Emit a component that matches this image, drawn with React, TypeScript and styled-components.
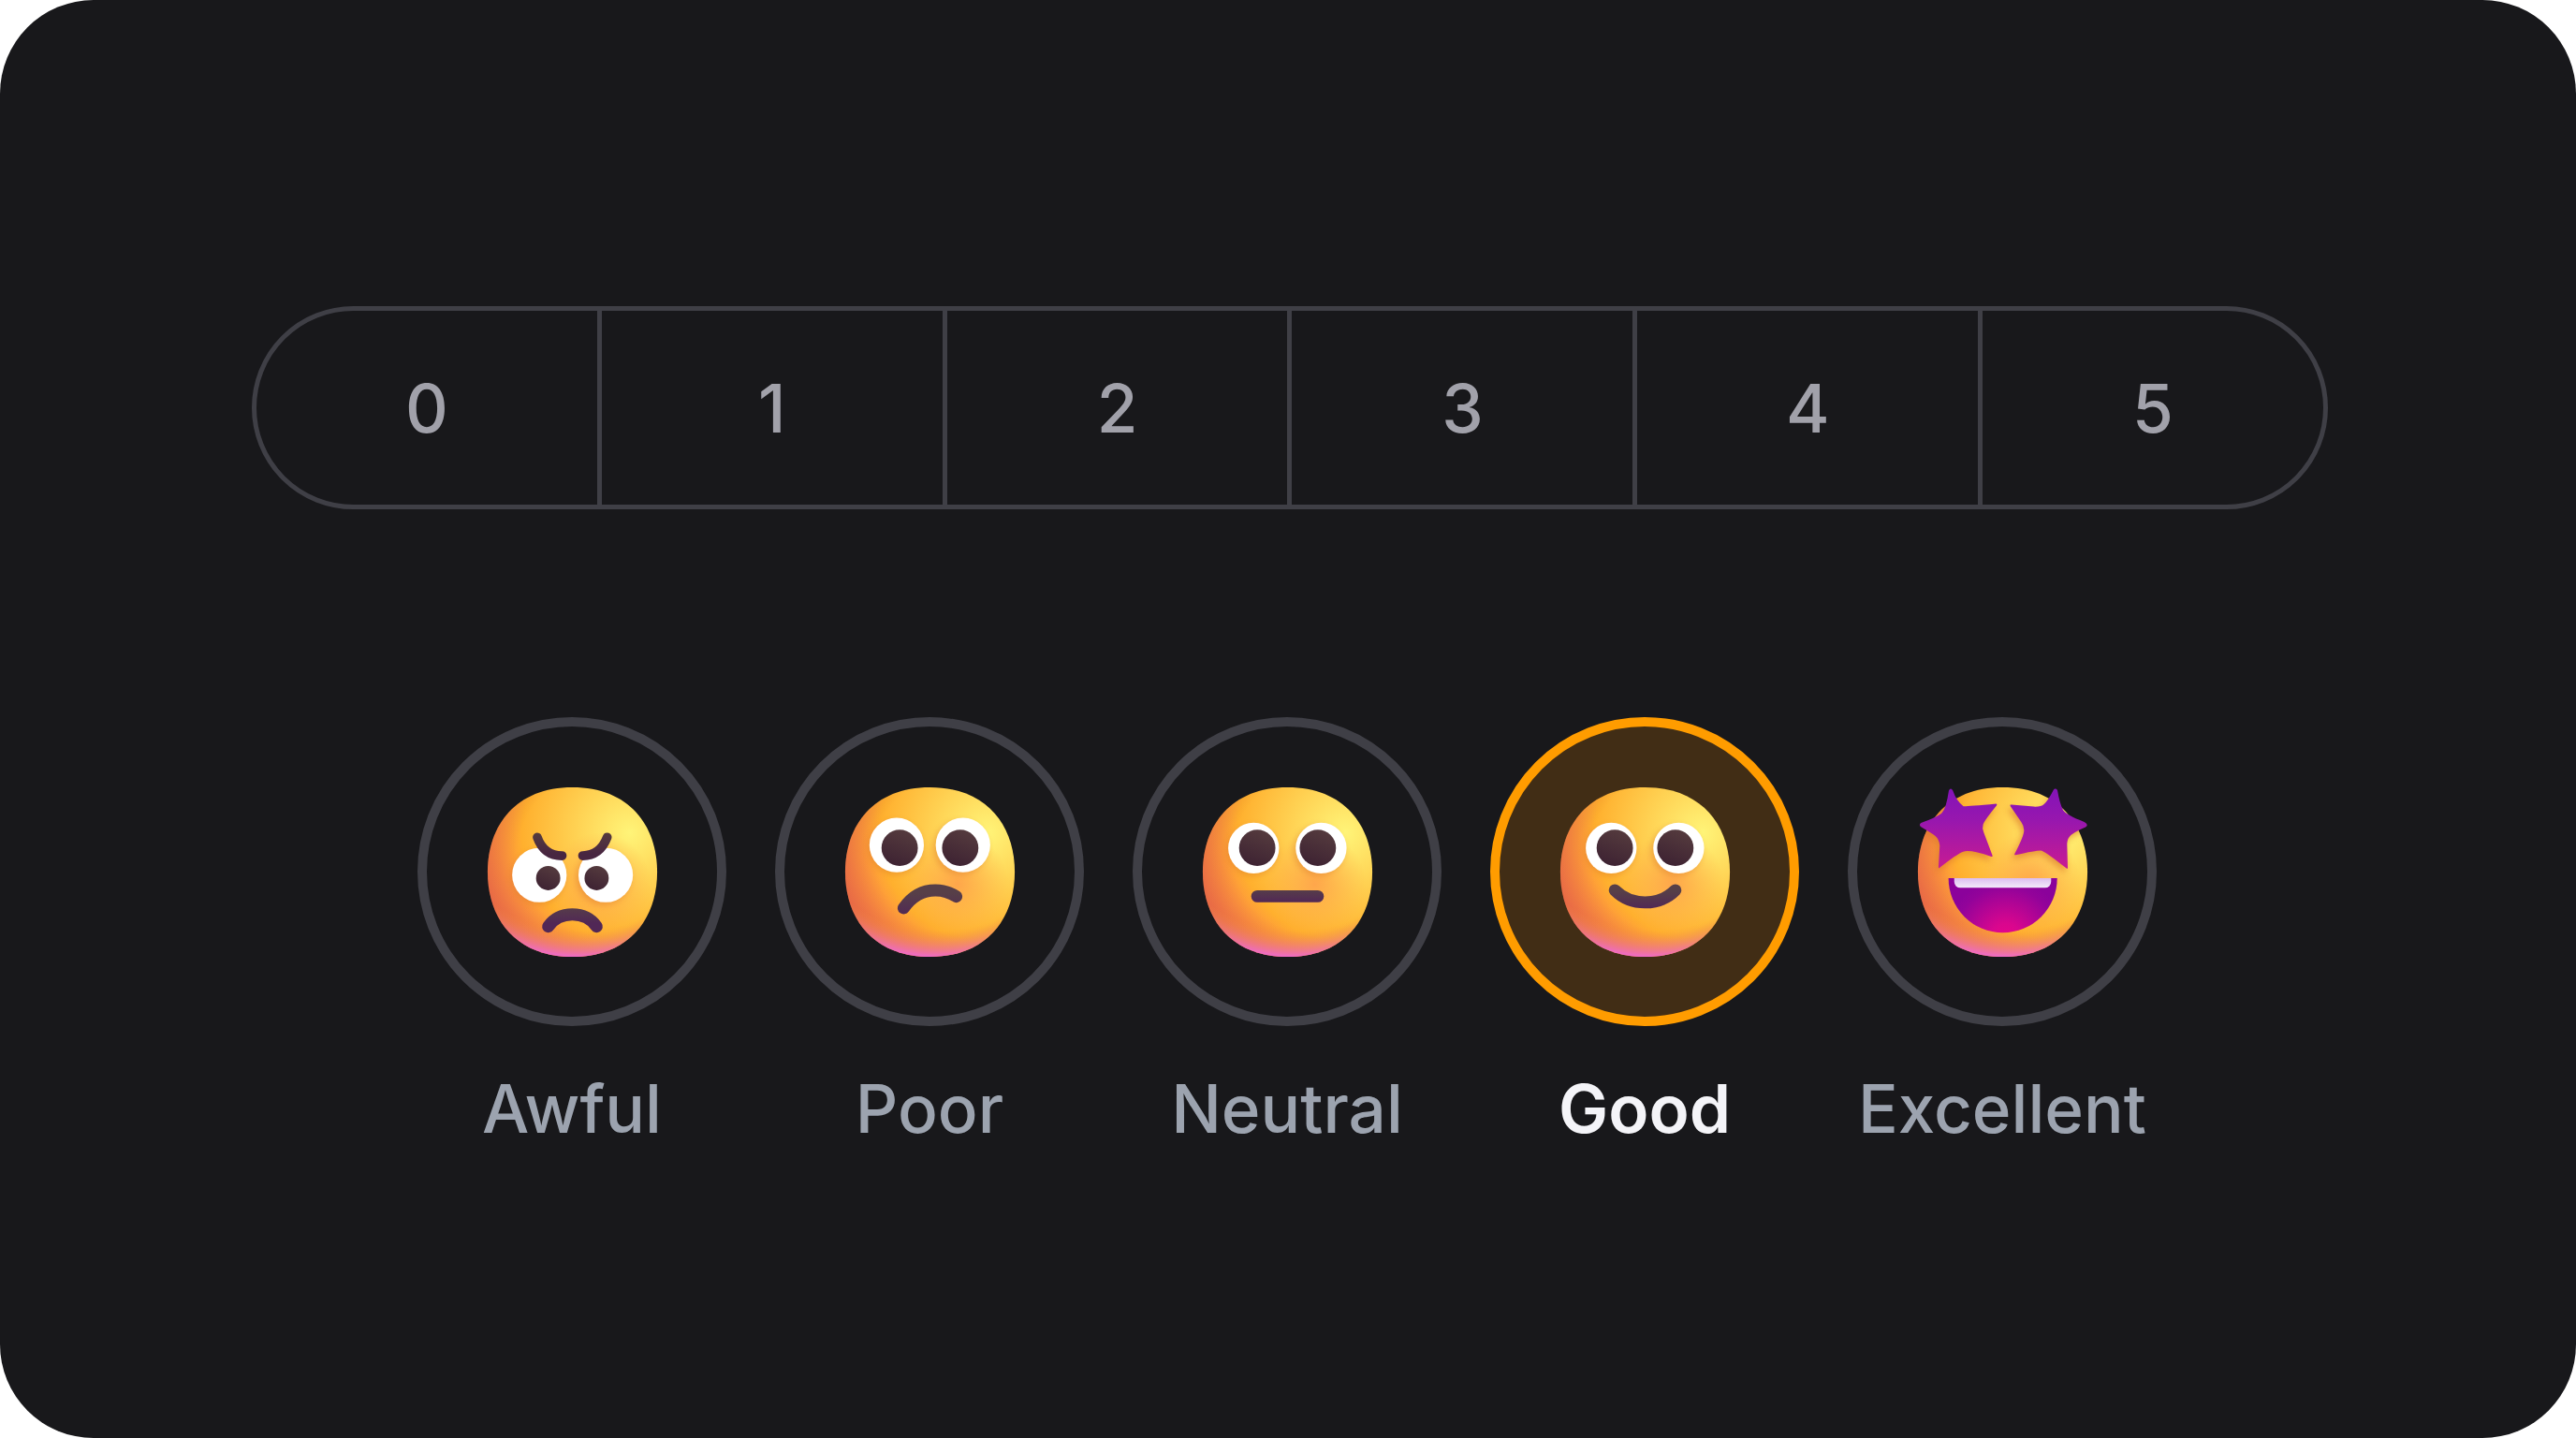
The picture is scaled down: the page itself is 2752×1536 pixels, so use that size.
import React, { useId, useState } from "react";
import styled, { createGlobalStyle } from "styled-components";

const GlobalStyle = createGlobalStyle`
  *, *::before, *::after { box-sizing: border-box; }
  body { margin: 0; background: #ffffff; }
`;

const Card = styled.main`
  display: flex;
  flex-direction: column;
  gap: 222px;
  min-height: 100vh;
  padding: 327px 265px 96px 269px;
  border-radius: 100px;
  background: #18181b;
  font-family: Inter, "Liberation Sans", sans-serif;
  font-size: 71px;
  line-height: 96px;
  font-weight: 500;
`;

const Scale = styled.div`
  display: flex;
`;

const ScaleButton = styled.button`
  flex: 1 1 0;
  height: 217px;
  padding: 0;
  border: 5px solid #3f3f46;
  background: transparent;
  color: #a1a1aa;
  font: inherit;
  cursor: pointer;

  & + & {
    margin-left: -5px;
  }
  &:first-child {
    border-radius: 109px 0 0 109px;
  }
  &:last-child {
    border-radius: 0 109px 109px 0;
  }
  &[aria-pressed="true"] {
    color: #f4f4f8;
  }
`;

const Moods = styled.div`
  display: flex;
  justify-content: center;
  gap: 52px;
  padding-right: 6px;
`;

const Mood = styled.label`
  display: flex;
  flex-direction: column;
  align-items: center;
  gap: 40px;
  width: 330px;
  cursor: pointer;
`;

const Dial = styled.span`
  display: grid;
  place-items: center;
  width: 330px;
  height: 330px;

  & > * {
    grid-area: 1 / 1;
  }
`;

const MoodInput = styled.input`
  appearance: none;
  width: 100%;
  height: 100%;
  margin: 0;
  border: 10px solid #3f3f46;
  border-radius: 50%;
  cursor: pointer;

  &:checked {
    border-color: #ff9c00;
    background: #412d15;
  }
`;

const MoodText = styled.span<{ $active: boolean }>`
  color: ${(p) => (p.$active ? "#f4f4f8" : "#9ca3af")};
  font-weight: ${(p) => (p.$active ? 600 : 500)};
`;

const FaceSvg = styled.svg`
  width: 207px;
  height: 207px;
  pointer-events: none;
`;

type Kind = "awful" | "poor" | "neutral" | "good" | "excellent";

const HEAD =
  "M16 30C25.33 30 30 23.73 30 16C30 8.27 25.33 2 16 2C6.67 2 2 8.27 2 16C2 23.73 6.67 30 16 30Z";

interface EyesProps {
  id: string;
  left: [number, number];
  right: [number, number];
  r: number;
  pupilLeft: [number, number];
  pupilRight: [number, number];
  pupilR: number;
}

function Eyes({ id, left, right, r, pupilLeft, pupilRight, pupilR }: EyesProps) {
  return (
    <>
      <g fill="#d9762b" opacity="0.4" filter={`url(#${id}-soft)`}>
        <circle cx={left[0] - 0.2} cy={left[1] + 0.4} r={r} />
        <circle cx={right[0] - 0.4} cy={right[1] + 0.4} r={r} />
      </g>
      <circle cx={left[0]} cy={left[1]} r={r} fill="#fff" />
      <circle cx={right[0]} cy={right[1]} r={r} fill="#fff" />
      <circle cx={pupilLeft[0]} cy={pupilLeft[1]} r={pupilR} fill={`url(#${id}-pupil)`} />
      <circle cx={pupilRight[0]} cy={pupilRight[1]} r={pupilR} fill={`url(#${id}-pupil)`} />
    </>
  );
}

const STARS =
  "M160 72Q166 60 173 72Q184 105 207 122Q215 123 312 114Q316 116 313 120Q275 166 270 180Q266 192 272 206L300 280Q301 284 296 283Q230 260 206 267Q185 275 131 318Q127 322 127 316L131 248Q130 228 116 216Q106 209 71 188Q63 181 71 175Q128 154 138 143Q152 128 160 72Z" +
  "M495 70Q501 62 508 70Q515 112 526 134Q536 150 594 172Q610 181 598 189Q556 207 546 220Q538 230 539 248L541 318Q541 324 536 320Q478 273 458 264Q445 262 374 278Q369 279 371 274Q402 214 401 198Q401 185 392 172L357 121Q355 116 361 117L432 123Q456 124 465 115Q478 104 495 70Z";

function Features({ id, kind }: { id: string; kind: Kind }) {
  const line = {
    fill: "none",
    stroke: `url(#${id}-mouth)`,
    strokeWidth: 2,
    strokeLinecap: "round" as const,
  };
  switch (kind) {
    case "awful":
      return (
        <>
          <Eyes id={id} left={[10.55, 16.5]} right={[21.5, 16.5]} r={4.5} pupilLeft={[12, 17]} pupilRight={[20, 17]} pupilR={2} />
          <g fill="none" stroke={`url(#${id}-brow)`} strokeWidth="1.5" strokeLinecap="round">
            <path d="M10.2 10.25C10.9 12.2 12.3 13.3 14.3 13.3" />
            <path d="M21.75 10.25C21 12.2 19.7 13.3 17.7 13.3" />
          </g>
          <path {...line} d="M12 25C12.9 23.7 14.3 23 16 23C17.7 23 19.1 23.7 20 25" />
        </>
      );
    case "poor":
      return (
        <>
          <Eyes id={id} left={[10.5, 11.55]} right={[21.45, 11.55]} r={4.5} pupilLeft={[11, 12]} pupilRight={[21, 12]} pupilR={3} />
          <path {...line} d="M11.65 21.95C13 20 14.8 19 16.9 19C18.3 19 19.4 19.4 20.35 20.05" />
        </>
      );
    case "neutral":
      return (
        <>
          <Eyes id={id} left={[10.4, 12.05]} right={[21.55, 12.05]} r={4.2} pupilLeft={[11, 12]} pupilRight={[21, 12]} pupilR={3} />
          <rect x="10" y="19" width="12" height="2" rx="1" fill={`url(#${id}-mouth)`} />
        </>
      );
    case "good":
      return (
        <>
          <Eyes id={id} left={[10.4, 12.05]} right={[21.55, 12.05]} r={4.2} pupilLeft={[11, 12]} pupilRight={[21, 12]} pupilR={3} />
          <path {...line} d="M11 19C12.3 20.3 14 21 16 21C18 21 19.7 20.3 21 19" />
        </>
      );
    default:
      return (
        <>
          <g clipPath={`url(#${id}-head)`}>
            <path d={STARS} transform="translate(-1.5 -.5) scale(.05155)" fill="#d9762b" opacity="0.6" filter={`url(#${id}-soft-star)`} />
          </g>
          <path d={STARS} transform="translate(-1.144 -1.144) scale(.05155)" fill={`url(#${id}-star)`} />
          <path d="M7.05 17H25A8.97 9 0 0 1 7.05 17Z" fill={`url(#${id}-grin)`} />
          <path d="M8 17H24V17.6A1 1 0 0 1 23 18.6H9A1 1 0 0 1 8 17.6Z" fill={`url(#${id}-teeth)`} />
        </>
      );
  }
}

const MOUTH_RANGE: Record<Kind, [number, number]> = {
  awful: [21.5, 24.5],
  poor: [19.5, 23.5],
  neutral: [18.8, 21],
  good: [19.2, 22.2],
  excellent: [17, 26],
};

function Face({ kind }: { kind: Kind }) {
  const id = useId().replace(/[^a-zA-Z0-9]/g, "");
  const [mouthTop, mouthBottom] = MOUTH_RANGE[kind];
  return (
    <FaceSvg viewBox="0 0 32 32" aria-hidden="true">
      <defs>
        <clipPath id={`${id}-head`}>
          <path d={HEAD} />
        </clipPath>
        <radialGradient id={`${id}-base`} gradientUnits="userSpaceOnUse" cx="0" cy="0" r="1" gradientTransform="translate(25.5 9.5) rotate(132.8) scale(37.5)">
          <stop stopColor="#fff478" />
          <stop offset="0.4744" stopColor="#ffb02e" />
          <stop offset="1" stopColor="#f70a8d" />
        </radialGradient>
        <radialGradient id={`${id}-warm`} gradientUnits="userSpaceOnUse" cx="20.5" cy="18" r="8.5">
          <stop stopColor="#ffa64b" />
          <stop offset="1" stopColor="#ffae46" stopOpacity="0" />
        </radialGradient>
        <radialGradient id={`${id}-edge`} gradientUnits="userSpaceOnUse" cx="20" cy="13" r="21">
          <stop offset="0.62" stopColor="#c5602f" stopOpacity="0" />
          <stop offset="1" stopColor="#c5602f" stopOpacity="0.5" />
        </radialGradient>
        <radialGradient id={`${id}-pink`} gradientUnits="userSpaceOnUse" cx="17.5" cy="0" r="30.5">
          <stop offset="0.84" stopColor="#f59639" stopOpacity="0" />
          <stop offset="0.98" stopColor="#ee6cc0" />
        </radialGradient>
        <linearGradient id={`${id}-pupil`} x1="0.7" y1="0" x2="0.3" y2="1">
          <stop stopColor="#553b3e" />
          <stop offset="1" stopColor="#3d2232" />
        </linearGradient>
        <linearGradient id={`${id}-brow`} gradientUnits="userSpaceOnUse" x1="16" y1="9.5" x2="16" y2="13">
          <stop stopColor="#553b3e" />
          <stop offset="1" stopColor="#482641" />
        </linearGradient>
        <linearGradient id={`${id}-mouth`} gradientUnits="userSpaceOnUse" x1="16" y1={mouthTop} x2="16" y2={mouthBottom}>
          <stop stopColor="#573f48" />
          <stop offset="1" stopColor="#512756" />
        </linearGradient>
        <linearGradient id={`${id}-star`} gradientUnits="userSpaceOnUse" x1="0" y1="66" x2="0" y2="322">
          <stop stopColor="#8313b8" />
          <stop offset="0.4" stopColor="#9817ae" />
          <stop offset="1" stopColor="#c91b92" />
        </linearGradient>
        <radialGradient id={`${id}-grin`} gradientUnits="userSpaceOnUse" cx="16.5" cy="27" r="10">
          <stop stopColor="#e8048a" />
          <stop offset="0.25" stopColor="#d9068e" />
          <stop offset="0.85" stopColor="#93039a" />
          <stop offset="1" stopColor="#8b029b" />
        </radialGradient>
        <linearGradient id={`${id}-teeth`} x1="0" y1="0" x2="0" y2="1">
          <stop stopColor="#dcbdf0" />
          <stop offset="1" stopColor="#f3ebfa" />
        </linearGradient>
        <filter id={`${id}-soft`} x="-20%" y="-20%" width="140%" height="140%">
          <feGaussianBlur stdDeviation="0.5" />
        </filter>
        <filter id={`${id}-soft-star`} x="-20%" y="-20%" width="140%" height="140%">
          <feGaussianBlur stdDeviation="10" />
        </filter>
      </defs>
      <path d={HEAD} fill={`url(#${id}-base)`} />
      <path d={HEAD} fill={`url(#${id}-warm)`} />
      <path d={HEAD} fill={`url(#${id}-edge)`} />
      <path d={HEAD} fill={`url(#${id}-pink)`} />
      <Features id={id} kind={kind} />
    </FaceSvg>
  );
}

const SCORES = [0, 1, 2, 3, 4, 5];

const MOODS: { kind: Kind; label: string }[] = [
  { kind: "awful", label: "Awful" },
  { kind: "poor", label: "Poor" },
  { kind: "neutral", label: "Neutral" },
  { kind: "good", label: "Good" },
  { kind: "excellent", label: "Excellent" },
];

export default function App() {
  const [score, setScore] = useState<number | null>(null);
  const [mood, setMood] = useState<Kind>("good");

  return (
    <>
      <GlobalStyle />
      <Card>
        <Scale role="group">
          {SCORES.map((n) => (
            <ScaleButton key={n} type="button" aria-pressed={score === n} onClick={() => setScore(n)}>
              {n}
            </ScaleButton>
          ))}
        </Scale>
        <Moods role="radiogroup">
          {MOODS.map(({ kind, label }) => (
            <Mood key={kind}>
              <Dial>
                <MoodInput type="radio" name="mood" value={kind} checked={mood === kind} onChange={() => setMood(kind)} />
                <Face kind={kind} />
              </Dial>
              <MoodText $active={mood === kind}>{label}</MoodText>
            </Mood>
          ))}
        </Moods>
      </Card>
    </>
  );
}
